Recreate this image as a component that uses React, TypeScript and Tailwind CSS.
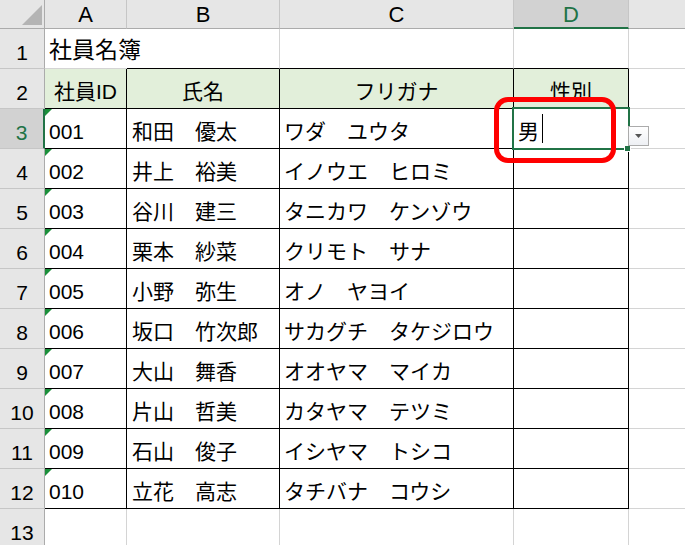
import React from "react";

const rows: [string, string, string, string][] = [
  ["001", "和田　優太", "ワダ　ユウタ", "男"],
  ["002", "井上　裕美", "イノウエ　ヒロミ", ""],
  ["003", "谷川　建三", "タニカワ　ケンゾウ", ""],
  ["004", "栗本　紗菜", "クリモト　サナ", ""],
  ["005", "小野　弥生", "オノ　ヤヨイ", ""],
  ["006", "坂口　竹次郎", "サカグチ　タケジロウ", ""],
  ["007", "大山　舞香", "オオヤマ　マイカ", ""],
  ["008", "片山　哲美", "カタヤマ　テツミ", ""],
  ["009", "石山　俊子", "イシヤマ　トシコ", ""],
  ["010", "立花　高志", "タチバナ　コウシ", ""],
];

const font = "font-['Liberation_Sans','Noto_Sans_CJK_JP',sans-serif]";

function ColHeader({ label, selected, last }: { label: string; selected?: boolean; last?: boolean }) {
  return (
    <div
      className={
        "flex items-center justify-center text-[22px] leading-none " +
        (selected
          ? "bg-[#d2d2d2] text-[#217346] border-b-2 border-b-[#217346] border-r border-r-[#c6c6c6]"
          : "bg-[#e6e6e6] text-black border-b border-b-[#ababab] " + (last ? "" : "border-r border-r-[#c6c6c6]"))
      }
    >
      <span className="pt-[2px]">{label}</span>
    </div>
  );
}

function RowHeader({ n, selected }: { n: number; selected?: boolean }) {
  return (
    <div
      className={
        "flex items-end justify-center pb-[3px] text-[21px] leading-[24px] border-b border-b-[#c6c6c6] " +
        (selected
          ? "bg-[#d2d2d2] text-[#217346] border-r-2 border-r-[#217346]"
          : "bg-[#e6e6e6] text-black border-r border-r-[#ababab]")
      }
    >
      {n}
    </div>
  );
}

function Cell({
  children,
  className = "",
  center,
  flag,
}: {
  children?: React.ReactNode;
  className?: string;
  center?: boolean;
  flag?: boolean;
}) {
  return (
    <div
      className={
        "relative flex items-end pb-[4px] text-[21px] leading-[24px] whitespace-nowrap " +
        (center ? "justify-center " : "pl-[4px] ") +
        className
      }
    >
      {flag && (
        <svg className="absolute left-0 top-0" width="8" height="8" viewBox="0 0 8 8">
          <polygon points="0,0 7,0 0,7" fill="#1a8f3a" />
        </svg>
      )}
      {children}
    </div>
  );
}

export default function App() {
  const tb = "border-r border-b border-black";
  const grid = "border-r border-b border-[#d4d4d4]";
  return (
    <div className={"relative w-[685px] h-[545px] overflow-hidden bg-white text-black " + font}>
      <div className="grid grid-cols-[45px_82px_153px_234px_115px_1fr] grid-rows-[29px_repeat(13,40px)]">
        {/* header row */}
        <div className="relative bg-[#e6e6e6] border-r border-b border-[#ababab]">
          <svg className="absolute left-0 top-0" width="44" height="28" viewBox="0 0 44 28">
            <polygon points="42,5 42,25 22,25" fill="#b4b4b4" />
          </svg>
        </div>
        <ColHeader label="A" />
        <ColHeader label="B" />
        <ColHeader label="C" />
        <ColHeader label="D" selected />
        <ColHeader label="" last />

        {/* row 1 */}
        <RowHeader n={1} />
        <Cell className="border-b border-[#d4d4d4] z-10 text-[23px] pb-[6px]">社員名簿</Cell>
        <Cell className="border-r border-b border-r-[#d4d4d4] border-b-black" />
        <Cell className="border-r border-b border-r-[#d4d4d4] border-b-black" />
        <Cell className="border-r border-b border-r-[#d4d4d4] border-b-black" />
        <Cell className="border-b border-[#d4d4d4]" />

        {/* row 2 */}
        <RowHeader n={2} />
        <Cell className={tb + " bg-[#e2efda]"} center>社員ID</Cell>
        <Cell className={tb + " bg-[#e2efda]"} center>氏名</Cell>
        <Cell className={tb + " bg-[#e2efda]"} center>フリガナ</Cell>
        <Cell className={tb + " bg-[#e2efda]"} center>性別</Cell>
        <Cell className="border-b border-[#d4d4d4]" />

        {rows.map((r, i) => (
          <React.Fragment key={r[0]}>
            <RowHeader n={i + 3} selected={i === 0} />
            <Cell className={tb} flag>{r[0]}</Cell>
            <Cell className={tb + " pl-[5px]"}>{r[1]}</Cell>
            <Cell className={tb}>{r[2]}</Cell>
            <Cell className={tb}>
              {i === 0 ? (
                <span className="flex items-end">
                  <span>{r[3]}</span>
                  <span className="ml-[3px] mb-[1px] inline-block w-px h-[29px] bg-black" />
                </span>
              ) : null}
            </Cell>
            <Cell className="border-b border-[#d4d4d4]" />
          </React.Fragment>
        ))}

        {/* row 13 */}
        <RowHeader n={13} />
        <Cell className={grid} />
        <Cell className={grid} />
        <Cell className={grid} />
        <Cell className={grid} />
        <Cell className="border-b border-[#d4d4d4]" />
      </div>

      {/* selected cell outline */}
      <div className="absolute left-[512px] top-[107px] w-[118px] h-[43px] border-2 border-[#217346] pointer-events-none" />
      <div className="absolute left-[625px] top-[146px] w-[5px] h-[5px] bg-[#217346] border border-white box-content -translate-x-[1px] -translate-y-[1px]" />

      {/* dropdown button */}
      <div className="absolute left-[628px] top-[126px] w-[21px] h-[20px] border border-[#ababab] bg-gradient-to-b from-white to-[#eef0f4] flex items-center justify-center">
        <svg width="7" height="4" viewBox="0 0 7 4">
          <polygon points="0,0 7,0 3.5,4" fill="#555" />
        </svg>
      </div>

      {/* red annotation */}
      <div className="absolute left-[494px] top-[97px] w-[122px] h-[66px] border-[5px] border-[#ff0000] rounded-[14px] pointer-events-none" />
    </div>
  );
}
